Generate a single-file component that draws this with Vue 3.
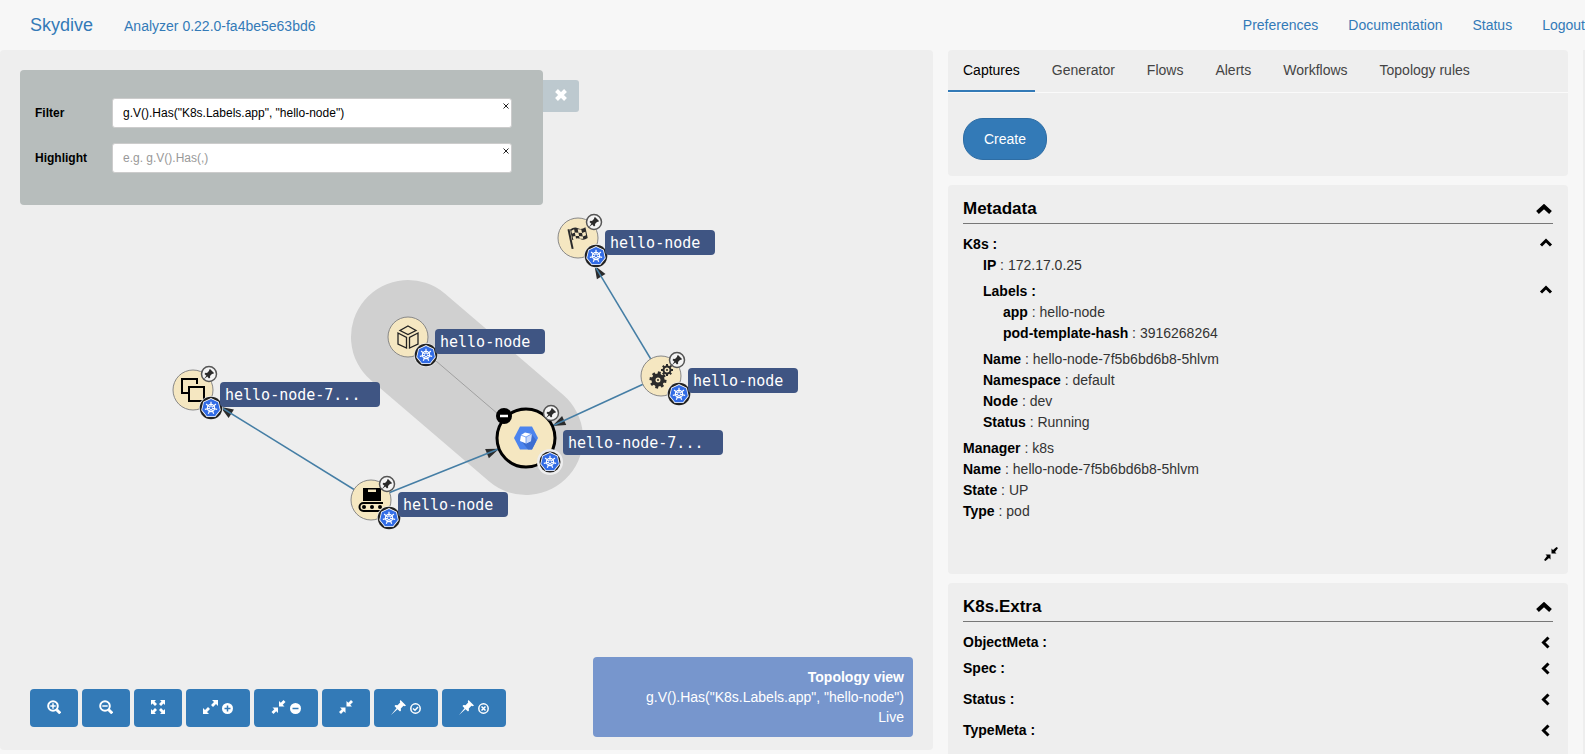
<script setup>
import { ref } from 'vue'

const filter = ref('g.V().Has("K8s.Labels.app", "hello-node")')
const highlight = ref('')
const activeTab = ref('Captures')

const menu = ['Preferences', 'Documentation', 'Status', 'Logout']
const tabs = ['Captures', 'Generator', 'Flows', 'Alerts', 'Workflows', 'Topology rules']

const tools = [
  { label: 'Zoom in', icon: 'zoom-in' },
  { label: 'Zoom out', icon: 'zoom-out' },
  { label: 'Fit to screen', icon: 'fit' },
  { label: 'Expand all', icon: 'expand', extra: 'plus' },
  { label: 'Collapse all', icon: 'shrink', extra: 'minus' },
  { label: 'Collapse', icon: 'shrink' },
  { label: 'Pin all', icon: 'pin', extra: 'ok' },
  { label: 'Unpin all', icon: 'pin', extra: 'remove' },
]

const nodes = [
  { id: 'service', x: 578, y: 188, icon: 'flag', label: 'hello-node', pinned: true },
  { id: 'deployment', x: 661, y: 326, icon: 'gears', label: 'hello-node', pinned: true },
  { id: 'container', x: 408, y: 287, icon: 'boxes', label: 'hello-node', pinned: false },
  { id: 'replica', x: 193, y: 340, icon: 'copies', label: 'hello-node-7...', pinned: true },
  { id: 'job', x: 371, y: 450, icon: 'conveyor', label: 'hello-node', pinned: true },
  { id: 'pod', x: 526, y: 388, icon: 'pod', label: 'hello-node-7...', pinned: true, selected: true },
].map((n) => ({
  ...n,
  pin: n.selected ? [25, -25] : [16, -16],
  badge: n.selected ? [24, 24] : [18, 18],
  tag: n.selected ? [37, -8] : [27, -8],
  tagWidth: n.label.length > 10 ? 160 : 110,
}))

const links = [
  { x1: 661, y1: 326, x2: 578, y2: 188, tip: 32 },
  { x1: 661, y1: 326, x2: 526, y2: 388, tip: 29 },
  { x1: 371, y1: 450, x2: 193, y2: 340, tip: 32 },
  { x1: 371, y1: 450, x2: 526, y2: 388, tip: 29 },
].map((l) => {
  const angle = Math.atan2(l.y2 - l.y1, l.x2 - l.x1)
  return {
    ...l,
    head: `translate(${l.x2 - Math.cos(angle) * l.tip} ${l.y2 - Math.sin(angle) * l.tip}) rotate(${(angle * 180) / Math.PI})`,
  }
})

function heptagon(r) {
  return Array.from({ length: 7 }, (_, i) => {
    const a = (i * 2 * Math.PI) / 7 - Math.PI / 2
    return `${(r * Math.cos(a)).toFixed(2)},${(r * Math.sin(a)).toFixed(2)}`
  }).join(' ')
}
const spokes = Array.from({ length: 7 }, (_, i) => (i * 360) / 7)
const teeth = [0, 45, 90, 135, 180, 225, 270, 315]

const metadata = [
  { key: 'K8s', depth: 0, group: true },
  { key: 'IP', value: '172.17.0.25', depth: 1 },
  { key: 'Labels', depth: 1, group: true, apart: true },
  { key: 'app', value: 'hello-node', depth: 2 },
  { key: 'pod-template-hash', value: '3916268264', depth: 2 },
  { key: 'Name', value: 'hello-node-7f5b6bd6b8-5hlvm', depth: 1, apart: true },
  { key: 'Namespace', value: 'default', depth: 1 },
  { key: 'Node', value: 'dev', depth: 1 },
  { key: 'Status', value: 'Running', depth: 1 },
  { key: 'Manager', value: 'k8s', depth: 0, apart: true },
  { key: 'Name', value: 'hello-node-7f5b6bd6b8-5hlvm', depth: 0 },
  { key: 'State', value: 'UP', depth: 0 },
  { key: 'Type', value: 'pod', depth: 0 },
]
const extra = [
  { key: 'ObjectMeta' },
  { key: 'Spec', apart: true },
  { key: 'Status', wide: true },
  { key: 'TypeMeta', wide: true },
]
</script>

<template>
  <div class="app">
    <header class="topbar">
      <a class="brand" href="#">Skydive</a>
      <a class="version" href="#">Analyzer 0.22.0-fa4be5e63bd6</a>
      <nav class="menu">
        <a v-for="item in menu" :key="item" href="#">{{ item }}</a>
      </nav>
    </header>

    <main class="content">
      <section class="topology">
        <svg class="graph" role="img" aria-label="Topology graph">
          <line class="hull" x1="408" y1="287" x2="526" y2="388" />
          <line class="owner" x1="408" y1="287" x2="526" y2="388" />
          <g v-for="(l, i) in links" :key="i">
            <path class="arrow" d="M0 0L-13 -5V5Z" :transform="l.head" />
            <line class="link" :x1="l.x1" :y1="l.y1" :x2="l.x2" :y2="l.y2" />
          </g>

          <g v-for="n in nodes" :key="n.id" :transform="`translate(${n.x} ${n.y})`">
            <circle class="disc" :class="{ selected: n.selected }" :r="n.selected ? 29 : 20" />

            <g v-if="n.icon === 'flag'" class="dark" transform="rotate(-12)">
              <path d="M-8.500 -10.500h2V9.500h-2z" />
              <path
                fill-rule="evenodd"
                d="M-6 -10Q-1 -12 2 -9.500T9.500 -9V2Q5 4 2 1.500T-6 1ZM-5 -8.500V-5.500L-2 -6V-9.300ZM1.500 -8.500V-5L5 -4V-7.700ZM-2 -6V-2.500L1.500 -1.800V-5ZM5 -4V-.5L8.500 -1V-4.500ZM-5 -2.500V.5L-2 0V-2.500ZM1.500 -1.800V1L5 1.800V-.5Z"
              />
            </g>

            <g v-else-if="n.icon === 'gears'" class="dark">
              <g transform="translate(-3 4)">
                <rect v-for="a in teeth" :key="a" x="-1.500" y="-8.500" width="3" height="4" :transform="`rotate(${a + 10})`" />
                <circle class="gear" r="4.500" stroke-width="4" />
                <circle r="1" />
              </g>
              <g transform="translate(6 -6)">
                <rect v-for="a in teeth" :key="a" x="-1" y="-6" width="2" height="3" :transform="`rotate(${a})`" />
                <circle class="gear" r="3.500" stroke-width="2" />
                <circle r="1" />
              </g>
            </g>

            <g v-else-if="n.icon === 'boxes'" class="outline thin">
              <path d="M0 -11L8 -6.500L0 -2.500L-8 -6.500Z" />
              <path d="M-10 -4L-1.500 .5V11L-10 7Z" />
              <path d="M10 -4L1.500 .5V11L10 7Z" />
            </g>

            <g v-else-if="n.icon === 'copies'" class="outline">
              <path d="M-5 3H-11V-11H4V-6" />
              <rect x="-4" y="-3" width="15" height="14" />
            </g>

            <g v-else-if="n.icon === 'conveyor'">
              <path fill-rule="evenodd" d="M-8 -12H10V1H-8ZM-3 -10.500V-8H5V-10.500Z" />
              <path class="outline" d="M12 3H-7.500A4 4 0 0 0 -7.500 11H10" />
              <circle cx="-7" cy="7" r="2" />
              <circle cx="1" cy="7" r="2" />
              <circle cx="9" cy="7" r="2" />
            </g>

            <g v-else>
              <path fill="#4c84ee" d="M-6 -11.500H6L12 0L6 11.500H-6L-12 0Z" />
              <path fill="#3c6dd0" d="M5.500 -4L10.500 2.500L6 11.500H2L-4 4Z" />
              <path fill="#fff" d="M-1 -5.500L5.500 -4L5 3L0 5.500L-6 3L-5 -3Z" />
              <path fill="#c9d9fb" d="M0 -1L5.500 -4L5 3L0 5.500Z" />
              <path fill="none" stroke="#4c84ee" stroke-width=".7" d="M-5.500 -3L0 -1V6M0 -1L5.500 -4" />
            </g>

            <g v-if="n.selected" transform="translate(-22 -22)">
              <circle r="8" />
              <path stroke="#fff" stroke-width="2.500" d="M-4 0H4" />
            </g>

            <g v-if="n.pinned" :transform="`translate(${n.pin})`">
              <circle class="pin-disc" r="7.500" />
              <path class="dark" d="M1 -5L5 -1L4 0L3.200 -.2L1 2L1.200 3.500L0 4.500L-1.700 2.600L-5.500 5.500L-2.600 1.700L-4.500 0L-3.500 -1.200L-2 -1L.2 -3.200L0 -4Z" />
            </g>

            <g :transform="`translate(${n.badge})`">
              <circle class="halo" :r="n.selected ? 13 : 12" />
              <circle class="ring-dark" :r="n.selected ? 10.5 : 11.3" />
              <polygon fill="#fff" :points="heptagon(10)" />
              <polygon fill="#326ce5" :points="heptagon(9.1)" />
              <g class="wheel">
                <circle r="3.600" />
                <line v-for="a in spokes" :key="a" y1="-1" y2="-6.300" :transform="`rotate(${a})`" />
              </g>
            </g>

            <g :transform="`translate(${n.tag})`">
              <rect class="tag" :width="n.tagWidth" height="25" rx="4" />
              <text class="tag-text" x="5" y="18">{{ n.label }}</text>
            </g>
          </g>
        </svg>

        <div class="search">
          <form class="search-form" @submit.prevent>
            <label for="filter">Filter</label>
            <div class="field">
              <input id="filter" v-model="filter" type="text" />
              <button type="button" class="clear" aria-label="Clear filter" @click="filter = ''">
                <svg viewBox="0 0 6 6" width="6" height="6"><path d="M.5 .5L5.500 5.500M5.500 .5L.5 5.500" /></svg>
              </button>
            </div>
            <label for="highlight">Highlight</label>
            <div class="field">
              <input id="highlight" v-model="highlight" type="text" placeholder="e.g. g.V().Has(,)" />
              <button type="button" class="clear" aria-label="Clear highlight" @click="highlight = ''">
                <svg viewBox="0 0 6 6" width="6" height="6"><path d="M.5 .5L5.500 5.500M5.500 .5L.5 5.500" /></svg>
              </button>
            </div>
          </form>
          <button type="button" class="close" aria-label="Close">
            <svg viewBox="0 0 12 12" width="12" height="12"><path d="M1.500 1.500L10.500 10.500M10.500 1.500L1.500 10.500" /></svg>
          </button>
        </div>

        <div class="bottom">
          <div class="tools">
            <button v-for="t in tools" :key="t.label" type="button" :aria-label="t.label">
              <svg v-if="t.icon === 'zoom-in' || t.icon === 'zoom-out'" class="glyph" viewBox="0 0 14 14" width="14" height="14">
                <circle class="stroke" cx="6" cy="6" r="4.800" />
                <path class="stroke thick" d="M9.700 9.700L13.300 13.300" />
                <path class="stroke mark" d="M3.300 6H8.700" />
                <path v-if="t.icon === 'zoom-in'" class="stroke mark" d="M6 3.300V8.700" />
              </svg>
              <svg v-else-if="t.icon === 'fit'" class="glyph" viewBox="0 0 14 14" width="14" height="14">
                <g v-for="a in [0, 90, 180, 270]" :key="a" :transform="`rotate(${a} 7 7)`">
                  <path d="M0 0H5L3.500 1.500L6 4L4 6L1.500 3.500L0 5Z" />
                </g>
              </svg>
              <svg v-else-if="t.icon === 'expand'" class="glyph" viewBox="0 0 15 14" width="15" height="14">
                <path d="M15 0V6L13 4L10 7L8 5L11 2L9 0Z" />
                <path d="M0 14V8L2 10L5 7L7 9L4 12L6 14Z" />
              </svg>
              <svg v-else-if="t.icon === 'shrink'" class="glyph" viewBox="0 0 14 14" :width="t.extra ? 15 : 14" height="14">
                <path d="M7.500 6.500V1L9.300 2.800L12 0L14 2L11.200 4.700L13 6.500Z" />
                <path d="M6.500 7.500V13L4.700 11.200L2 14L0 12L2.800 9.300L1 7.500Z" />
              </svg>
              <svg v-else class="glyph" viewBox="0 0 15 15" width="15" height="15">
                <path d="M9.500 0L15 5.500L13.800 6.200L12.500 5.800L9.800 8.500L10 10.500L9 11.500L6.500 9.300L0 15L5.500 8.300L3.500 6L4.500 5L6.500 5.200L9.200 2.500L8.800 1.200Z" />
              </svg>
              <svg v-if="t.extra" class="glyph small" viewBox="0 0 11 11" width="11" height="11">
                <template v-if="t.extra === 'plus' || t.extra === 'minus'">
                  <circle cx="5.500" cy="5.500" r="5.500" />
                  <path class="cut" d="M2.500 5.500H8.500" />
                  <path v-if="t.extra === 'plus'" class="cut" d="M5.500 2.500V8.500" />
                </template>
                <template v-else>
                  <circle class="stroke ring" cx="5.500" cy="5.500" r="4.700" />
                  <path v-if="t.extra === 'ok'" class="stroke mark" d="M3 5.500L5 7.200L8 4" />
                  <path v-else class="stroke mark" d="M3.500 3.500L7.500 7.500M7.500 3.500L3.500 7.500" />
                </template>
              </svg>
            </button>
          </div>
          <div class="status">
            <strong>Topology view</strong>
            <span>g.V().Has("K8s.Labels.app", "hello-node")</span>
            <span>Live</span>
          </div>
        </div>
      </section>

      <div class="side">
        <section class="panel">
          <div class="tabs" role="tablist">
            <button
              v-for="tab in tabs"
              :key="tab"
              type="button"
              role="tab"
              :aria-selected="tab === activeTab"
              :class="{ active: tab === activeTab }"
              @click="activeTab = tab"
            >{{ tab }}</button>
          </div>
          <div class="tab-body">
            <button type="button" class="create">Create</button>
          </div>
        </section>

        <section class="panel details">
          <div class="heading">
            <h2>Metadata</h2>
            <svg viewBox="0 0 16 10" width="16" height="10"><path d="M1.500 8.500L8 2.500L14.500 8.500" /></svg>
          </div>
          <div class="rows">
            <div v-for="(row, i) in metadata" :key="i" class="row" :class="['depth-' + row.depth, { apart: row.apart }]">
              <span><b>{{ row.key }}{{ row.group ? ' :' : '' }}</b><template v-if="!row.group"> : {{ row.value }}</template></span>
              <svg v-if="row.group" class="up" viewBox="0 0 14 9" width="14" height="9"><path d="M2 7.500L7 2.500L12 7.500" /></svg>
            </div>
          </div>
          <div class="footer">
            <button type="button" class="shrink" aria-label="Shrink panel">
              <svg viewBox="0 0 14 14" width="14" height="14">
                <path d="M7.500 6.500V1.500L9 3L12.500 0L14 1L11 5L12.500 6.500Z" />
                <path d="M6.500 7.500V12.500L5 11L1.500 14L0 13L3 9L1.500 7.500Z" />
              </svg>
            </button>
          </div>
        </section>

        <section class="panel details">
          <div class="heading">
            <h2>K8s.Extra</h2>
            <svg viewBox="0 0 16 10" width="16" height="10"><path d="M1.500 8.500L8 2.500L14.500 8.500" /></svg>
          </div>
          <div class="rows">
            <div v-for="row in extra" :key="row.key" class="row" :class="{ apart: row.apart, wide: row.wide }">
              <b>{{ row.key }} :</b>
              <svg class="left" viewBox="0 0 9 13" width="9" height="13"><path d="M7.500 1.500L2.500 6.500L7.500 11.500" /></svg>
            </div>
          </div>
          <div class="footer"></div>
        </section>
      </div>

      <div class="edge"></div>
    </main>
  </div>
</template>

<style>
body {
  margin: 0;
  background: #f7f7f7;
}
</style>

<style scoped>
.app {
  height: 100vh;
  overflow: hidden;
  display: flex;
  flex-direction: column;
  font: 14px/20px "Liberation Sans", Arial, sans-serif;
  color: #333;
  background: #f7f7f7;
}
.app *,
.app {
  box-sizing: border-box;
}
button {
  font: inherit;
  border: 0;
  padding: 0;
  margin: 0;
  cursor: pointer;
}
svg {
  display: block;
  flex: none;
}
a {
  color: #337ab7;
  text-decoration: none;
}

.topbar {
  flex: none;
  height: 50px;
  display: flex;
  align-items: center;
  padding-left: 30px;
}
.brand {
  font-size: 18px;
  margin-right: 31px;
}
.version {
  margin-top: 2px;
}
.menu {
  display: flex;
  margin-left: auto;
  margin-right: -15px;
}
.menu a {
  padding: 0 15px;
}

.content {
  flex: 1;
  min-height: 0;
  display: grid;
  grid-template-columns: minmax(0, 933fr) minmax(0, 620fr) 2px;
  gap: 15px;
}
.topology {
  position: relative;
  display: flex;
  flex-direction: column;
  justify-content: space-between;
  padding: 20px 20px 13px;
  margin-bottom: 4px;
  border-radius: 4px;
  background: #eee;
  overflow: hidden;
}
.edge {
  background: #eee;
}

.graph {
  position: absolute;
  inset: 0;
  width: 100%;
  height: 100%;
}
.hull {
  stroke: #d0d0d0;
  stroke-width: 114;
  stroke-linecap: round;
}
.owner {
  stroke: #a0a0a0;
}
.link {
  stroke: #457ea5;
  stroke-width: 1.500;
}
.arrow,
.dark {
  fill: #2b2b2b;
}
.disc {
  fill: #f5e7c1;
  stroke: #888;
}
.disc.selected {
  stroke: #000;
  stroke-width: 3;
}
.gear {
  fill: none;
  stroke: #2b2b2b;
}
.outline {
  fill: none;
  stroke: #000;
  stroke-width: 2;
}
.outline.thin {
  stroke: #222;
  stroke-width: 1.300;
}
.pin-disc {
  fill: #f4f4f4;
  stroke: #555;
  stroke-width: 1.500;
}
.halo {
  fill: #eee;
}
.ring-dark {
  fill: #222;
}
.wheel {
  fill: none;
  stroke: #fff;
  stroke-width: 1.200;
}
.tag {
  fill: #3f5583;
}
.tag-text {
  fill: #fff;
  font: 15px "DejaVu Sans Mono", monospace;
}

.search {
  position: relative;
  display: flex;
  align-items: flex-start;
}
.search-form {
  flex: 0 0 523px;
  display: grid;
  grid-template-columns: 77px 1fr;
  row-gap: 15px;
  align-items: center;
  padding: 28px 31px 32px 15px;
  border-radius: 4px;
  background: #b7bdbc;
}
.search-form label {
  font-size: 12px;
  font-weight: bold;
  color: #000;
}
.field {
  position: relative;
}
.field input {
  display: block;
  width: 100%;
  height: 30px;
  padding: 0 24px 0 10px;
  border: 1px solid #ccc;
  border-radius: 3px;
  background: #fff;
  font: 12px "Liberation Sans", Arial, sans-serif;
  color: #000;
}
.field input::placeholder {
  color: #999;
  opacity: 1;
}
.clear {
  position: absolute;
  top: 5px;
  right: 3px;
  background: none;
}
.clear path {
  stroke: #222;
  fill: none;
}
.close {
  width: 36px;
  height: 32px;
  margin-top: 10px;
  padding-bottom: 2px;
  display: flex;
  align-items: center;
  justify-content: center;
  border-radius: 0 3px 3px 0;
  background: #bdc9cf;
}
.close path {
  fill: none;
  stroke: #fff;
  stroke-width: 4;
}

.bottom {
  position: relative;
  display: flex;
  justify-content: space-between;
  align-items: center;
}
.tools {
  display: flex;
  gap: 4px;
  margin-top: 22px;
  padding-left: 10px;
}
.tools button {
  display: flex;
  align-items: center;
  gap: 4px;
  height: 38px;
  padding: 0 17px 2px;
  border-radius: 4px;
  background: #337ab7;
}
.glyph {
  fill: #fff;
}
.glyph.small {
  margin-top: 3px;
}
.glyph .stroke {
  fill: none;
  stroke: #fff;
  stroke-width: 2;
}
.glyph .thick {
  stroke-width: 3;
}
.glyph .mark,
.glyph .ring {
  stroke-width: 1.500;
}
.glyph .cut {
  stroke: #337ab7;
  stroke-width: 1.500;
}
.status {
  flex: 0 0 320px;
  display: flex;
  flex-direction: column;
  padding: 10px 9px;
  border-radius: 4px;
  background: #7796cd;
  color: #fff;
  text-align: right;
}

.side {
  display: flex;
  flex-direction: column;
  gap: 9px;
  min-height: 0;
}
.panel {
  flex: none;
  border-radius: 4px;
  background: #eee;
}
.tabs {
  display: flex;
  gap: 2px;
  border-bottom: 1px solid #fafafa;
}
.tabs button {
  padding: 10px 15px;
  border-bottom: 2px solid transparent;
  background: none;
  color: #444;
}
.tabs .active {
  border-color: #337ab7;
  color: #000;
}
.tab-body {
  padding: 25px 15px 16px;
}
.create {
  display: block;
  height: 42px;
  padding: 0 20px;
  border: 1px solid #2e6da4;
  border-radius: 20px;
  background: #337ab7;
  color: #fff;
}

.details {
  padding: 14px 15px 0;
}
.heading {
  display: flex;
  justify-content: space-between;
  align-items: center;
  padding-bottom: 4px;
  border-bottom: 1px solid #777;
  color: #000;
}
.heading h2 {
  margin: 0;
  font-size: 17px;
  line-height: 20px;
}
.heading path {
  fill: none;
  stroke: #000;
  stroke-width: 4;
}
.heading svg {
  margin-right: 1px;
}
.rows {
  padding-top: 10px;
}
.row {
  display: flex;
  justify-content: space-between;
  align-items: center;
  line-height: 21px;
}
.row b {
  color: #000;
}
.row path {
  fill: none;
  stroke: #000;
  stroke-width: 3;
}
.depth-1 {
  padding-left: 20px;
}
.depth-2 {
  padding-left: 40px;
}
.apart {
  margin-top: 5px;
}
.wide {
  margin-top: 10px;
}
.up {
  margin-bottom: 5px;
}
.left {
  margin-right: 3px;
}
.footer {
  display: flex;
  justify-content: flex-end;
  align-items: flex-end;
  height: 52px;
  padding-bottom: 13px;
  margin-right: -5px;
}
.shrink {
  background: none;
}
.shrink svg {
  fill: #000;
}
</style>
